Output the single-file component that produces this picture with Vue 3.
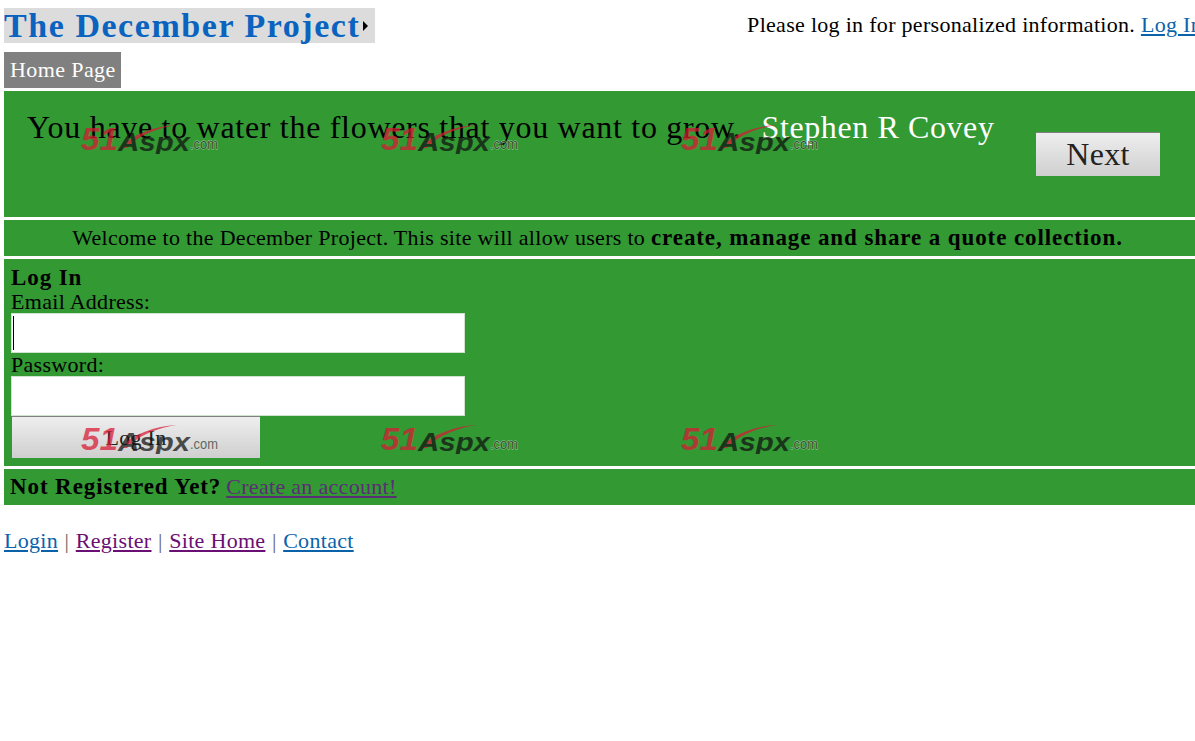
<template>
  <div class="page">
    <header class="top">
      <div class="title-box">
        <span class="title">The December Project</span>
        <span class="caret"></span>
      </div>
      <div class="login-note">
        Please log in for personalized information.
        <a href="#" class="link">Log In</a>
      </div>
    </header>

    <nav class="nav">
      <span class="nav-item">Home Page</span>
    </nav>

    <section class="panel quote">
      <div class="quote-text">
        <span>You have to water the flowers that you want to grow.</span>
        <span class="author">Stephen R Covey</span>
      </div>
      <button class="btn next-btn">Next</button>
      <div class="marks marks-top">
        <svg v-for="n in 3" :key="n" class="mark" width="138" height="32" viewBox="0 0 138 32">
          <path d="M38 26C52 12 74 4 96 3C76 6 58 13 46 26Z" class="mark-swoosh" />
          <text x="0" y="28" textLength="37" lengthAdjust="spacingAndGlyphs" class="mark-num">51</text>
          <text x="37" y="29" textLength="72" lengthAdjust="spacingAndGlyphs" class="mark-name">Aspx</text>
          <text x="109" y="27" textLength="28" lengthAdjust="spacingAndGlyphs" class="mark-com">.com</text>
        </svg>
      </div>
    </section>

    <section class="panel welcome">
      Welcome to the December Project. This site will allow users to
      <b class="strong">create, manage and share a quote collection.</b>
    </section>

    <section class="panel login">
      <div class="login-title strong">Log In</div>
      <label class="field-label">Email Address:</label>
      <div class="input-box"><span class="cursor"></span></div>
      <label class="field-label">Password:</label>
      <div class="input-box"></div>
      <button class="btn login-btn">Log In</button>
      <div class="marks marks-bottom">
        <svg v-for="n in 3" :key="n" class="mark" width="138" height="32" viewBox="0 0 138 32">
          <path d="M38 26C52 12 74 4 96 3C76 6 58 13 46 26Z" class="mark-swoosh" />
          <text x="0" y="28" textLength="37" lengthAdjust="spacingAndGlyphs" class="mark-num">51</text>
          <text x="37" y="29" textLength="72" lengthAdjust="spacingAndGlyphs" class="mark-name">Aspx</text>
          <text x="109" y="27" textLength="28" lengthAdjust="spacingAndGlyphs" class="mark-com">.com</text>
        </svg>
      </div>
    </section>

    <section class="panel register">
      <b class="strong">Not Registered Yet?</b>
      <a href="#" class="visited">Create an account!</a>
    </section>

    <footer class="foot">
      <a href="#" class="link">Login</a>
      <span class="sep">|</span>
      <a href="#" class="visited-foot">Register</a>
      <span class="sep">|</span>
      <a href="#" class="visited-foot">Site Home</a>
      <span class="sep">|</span>
      <a href="#" class="link">Contact</a>
    </footer>
  </div>
</template>

<script setup>
</script>

<style>
html,
body {
  overflow: hidden;
}
</style>

<style scoped>
.page {
  height: 741px;
  padding: 8px 0 0 4px;
  box-sizing: border-box;
  font-family: "Liberation Serif", Georgia, serif;
  font-size: 22px;
  letter-spacing: 0.3px;
  color: #000;
  overflow: hidden;
}

.strong {
  font-size: 23px;
  font-weight: 700;
  letter-spacing: 0.9px;
}

.top {
  display: flex;
  justify-content: space-between;
  align-items: flex-start;
  height: 44px;
}

.title-box {
  display: flex;
  align-items: center;
  width: 371px;
  height: 35px;
  background: #dcdcdc;
}

.title {
  font-size: 34px;
  font-weight: 700;
  color: #0a63bf;
  letter-spacing: 1.55px;
  white-space: nowrap;
}

.caret {
  margin-left: 3px;
  border-left: 5px solid #000;
  border-top: 5px solid transparent;
  border-bottom: 5px solid transparent;
}

.login-note {
  margin-right: -7px;
  padding-top: 4px;
  white-space: nowrap;
}

.link {
  color: #0a63aa;
}

.nav {
  display: flex;
  height: 39px;
}

.nav-item {
  display: flex;
  align-items: center;
  height: 36px;
  padding: 0 5px 0 6px;
  background: #808080;
  color: #fff;
  letter-spacing: 0.4px;
}

.panel {
  position: relative;
  margin-bottom: 3px;
  background: #339933;
  box-sizing: border-box;
}

.quote {
  display: flex;
  justify-content: space-between;
  height: 126px;
  padding: 16px 35px 0 23px;
  font-size: 32px;
  letter-spacing: 0.7px;
}

.quote-text {
  display: flex;
  gap: 20px;
  white-space: nowrap;
  line-height: 40px;
}

.author {
  color: #fff;
  letter-spacing: 0.6px;
}

.btn {
  display: block;
  border: 0;
  border-top: 1px solid #808080;
  background: linear-gradient(#eeeeee, #cfcfcf);
  color: #222;
  font-family: inherit;
  letter-spacing: 0.3px;
  padding: 0;
}

.next-btn {
  flex-shrink: 0;
  width: 124px;
  height: 44px;
  margin-top: 25px;
  font-size: 32px;
}

.welcome {
  height: 36px;
  padding-right: 4px;
  line-height: 35px;
  text-align: center;
  white-space: nowrap;
}

.login {
  height: 207px;
  padding: 7px 0 0 7px;
  line-height: 24px;
}

.field-label {
  display: block;
  line-height: 23px;
}

.input-box {
  position: relative;
  width: 454px;
  height: 40px;
  background: #fff;
  border: 1px solid #cfe3cf;
  box-sizing: border-box;
}

.cursor {
  position: absolute;
  left: 1px;
  top: 2px;
  width: 1px;
  height: 34px;
  background: #000;
}

.login-btn {
  width: 248px;
  height: 42px;
  margin: 0 0 0 1px;
  font-size: 22px;
}

.marks {
  position: absolute;
  left: 77px;
  display: flex;
  gap: 162px;
  pointer-events: none;
}

.marks-top {
  top: 31px;
}

.marks-bottom {
  top: 163px;
}

.mark {
  display: block;
  flex-shrink: 0;
  opacity: 0.72;
}

.mark-swoosh {
  fill: #da1833;
}

.mark-num {
  font: italic 700 32px "Liberation Sans", sans-serif;
  letter-spacing: 0;
  fill: #da1833;
}

.mark-name {
  font: italic 700 25px "Liberation Sans", sans-serif;
  letter-spacing: 0;
  fill: #111;
}

.mark-com {
  font: 400 15px "Liberation Sans", sans-serif;
  letter-spacing: 0;
  fill: #333;
  stroke: #d8e8d8;
  stroke-width: 0.8px;
  paint-order: stroke;
}

.register {
  height: 36px;
  padding-left: 6px;
  line-height: 36px;
  white-space: nowrap;
}

.visited {
  margin-left: 5px;
  color: #5c2d77;
}

.foot {
  display: flex;
  gap: 6.5px;
  margin-top: 18px;
  line-height: 36px;
}

.visited-foot {
  color: #6a0f73;
}

.sep {
  color: #666;
}
</style>
